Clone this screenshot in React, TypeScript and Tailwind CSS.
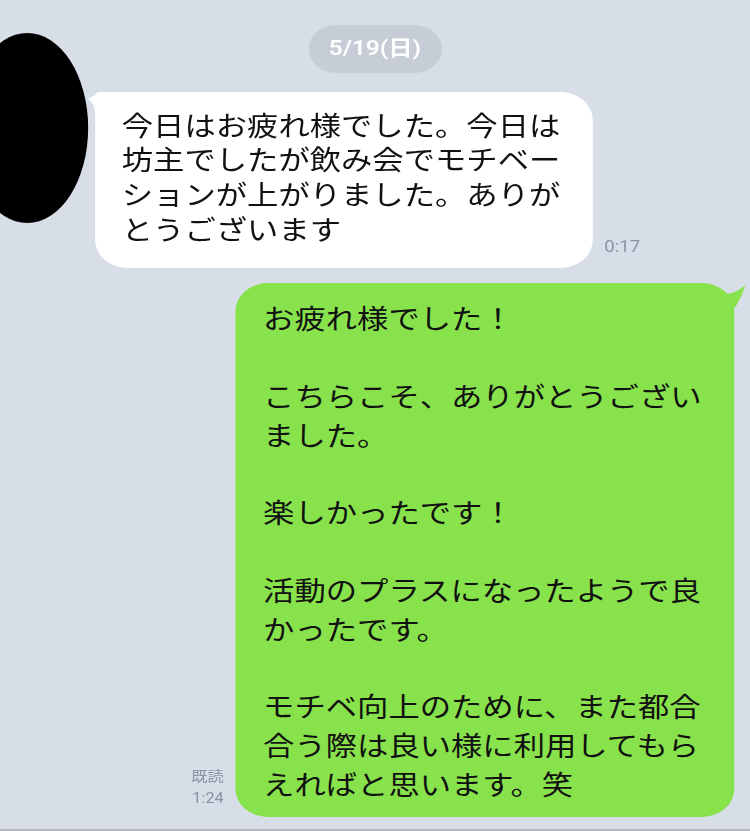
const incoming = [
  "今日はお疲れ様でした。今日は",
  "坊主でしたが飲み会でモチベー",
  "ションが上がりました。ありが",
  "とうございます",
];

const outgoing = [
  "お疲れ様でした！",
  "",
  "こちらこそ、ありがとうござい",
  "ました。",
  "",
  "楽しかったです！",
  "",
  "活動のプラスになったようで良",
  "かったです。",
  "",
  "モチベ向上のために、また都合",
  "合う際は良い様に利用してもら",
  "えればと思います。笑",
];

export default function App() {
  return (
    <div className="w-[750px] h-[831px] overflow-hidden flex flex-col bg-[#d8dee7] font-['Noto_Sans_CJK_JP',sans-serif]">
      <div className="flex-1 overflow-hidden">
        {/* the source shot is stretched sideways, so the whole chat is laid out narrow and widened */}
        <div className="w-[646.5px] origin-top-left scale-x-[1.16]">
          <div className="flex justify-center pt-[25px]">
            <div className="w-[115px] h-[48px] rounded-full bg-[#c7cdd7] flex items-center justify-center text-white text-[21px] font-semibold font-['Roboto','Noto_Sans_CJK_JP',sans-serif]">
              5/19(日)
            </div>
          </div>

          {/* incoming */}
          <div className="flex items-start mt-[19px]">
            <div className="w-[105px] h-[190px] shrink-0 rounded-[50%] bg-black -ml-[29px] -mt-[59px]"></div>
            <div className="relative ml-[6px] w-[429px] bg-white rounded-[28px] rounded-tl-[4px] pl-[23px] pt-[15.5px] pb-[21.5px] text-[27px] leading-[34.7px] text-[#111]">
              <svg className="absolute -left-[6px] top-0 w-[16px] h-[22px]" viewBox="-6 0 16 22">
                <path d="M -6 7 Q 2 0.5 10 0 L 10 22 L 0 22 Q 0 11 -6 7 Z" fill="#ffffff" />
              </svg>
              {incoming.map((line, i) => (
                <p key={i} className="whitespace-nowrap">{line}</p>
              ))}
            </div>
            <div className="self-end ml-[10px] mb-[10.5px] text-[16px] leading-[20px] text-[#8a93a2] font-['Roboto',sans-serif]">
              0:17
            </div>
          </div>

          {/* outgoing */}
          <div className="flex justify-end items-end mt-[15px] pr-[13.7px]">
            <div className="mr-[10px] mb-[8px] text-right text-[14px] leading-[22px] text-[#8a93a2] font-['Roboto','Noto_Sans_CJK_JP',sans-serif]">
              <p>既読</p>
              <p>1:24</p>
            </div>
            <div className="relative w-[430px] bg-[#88e24c] rounded-[28px] pl-[24px] pt-[16.5px] pb-[13px] text-[27px] leading-[38.8px] text-[#111]">
              <svg className="absolute -right-[10px] top-0 w-[20px] h-[30px]" viewBox="0 0 20 30">
                <path d="M 4 10.7 Q 12 10 19.5 2 Q 16 16 9 27 L 0 27 L 0 12 Z" fill="#88e24c" />
              </svg>
              {outgoing.map((line, i) => (
                <p key={i} className="whitespace-nowrap">{line || "\u00a0"}</p>
              ))}
            </div>
          </div>
        </div>
      </div>
      <div className="h-[2px] bg-[#b3b8c0]"></div>
    </div>
  );
}
